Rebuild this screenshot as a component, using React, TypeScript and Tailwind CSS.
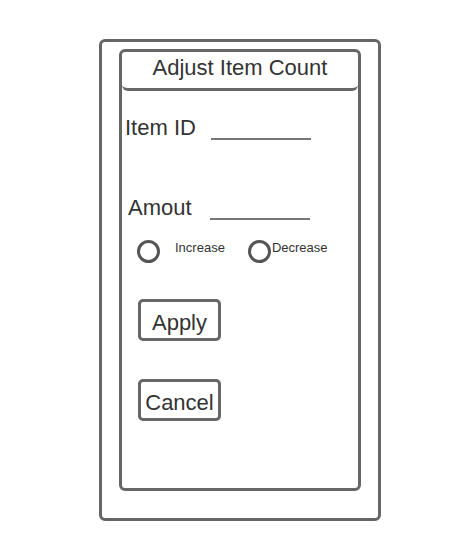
import React from "react";

export default function App() {
  return (
    <div
      className="w-[460px] h-[560px] bg-white pt-[39px] pl-[99px] text-[#333]"
      style={{ fontFamily: '"Liberation Sans", Arial, sans-serif' }}
    >
      <div className="w-[282px] h-[482px] border-[3px] border-[#666] rounded-[6px] pt-[7px] pl-[17px]">
        <div className="w-[242px] h-[442px] border-[3px] border-[#666] rounded-[6px] flex flex-col">
          <div className="h-[39px] shrink-0 border-b-[3px] border-[#666] rounded-b-[6px] flex items-center justify-center text-[22px] leading-none pb-[4px]">
            Adjust Item Count
          </div>
          <div className="flex items-start pl-[3px] mt-[26px] h-[23px]">
            <span className="text-[22px] leading-none">Item ID</span>
            <div className="ml-[15px] w-[100px] h-[23px] border-b-2 border-[#777]" />
          </div>
          <div className="flex items-start pl-[6px] mt-[57px] h-[23px]">
            <span className="text-[22px] leading-none">Amout</span>
            <div className="ml-[18px] w-[100px] h-[23px] border-b-2 border-[#777]" />
          </div>
          <div className="flex items-start mt-[20px] pl-[15px] h-[23px]">
            <div className="w-[23px] h-[23px] shrink-0 rounded-full border-[3px] border-[#555]" />
            <span className="ml-[15px] mt-[1px] text-[13px] leading-none">Increase</span>
            <div className="ml-[23px] w-[23px] h-[23px] shrink-0 rounded-full border-[3px] border-[#555]" />
            <span className="ml-[1px] mt-[1px] text-[13px] leading-none">Decrease</span>
          </div>
          <div className="pl-[16px] mt-[36px] flex flex-col gap-[38px]">
            <div className="w-[83px] h-[42px] border-[3px] border-[#666] rounded-[5px] flex items-center justify-center text-[22px] leading-none pt-[5px]">
              Apply
            </div>
            <div className="w-[83px] h-[42px] border-[3px] border-[#666] rounded-[5px] flex items-center justify-center text-[22px] leading-none pt-[5px]">
              Cancel
            </div>
          </div>
        </div>
      </div>
    </div>
  );
}
